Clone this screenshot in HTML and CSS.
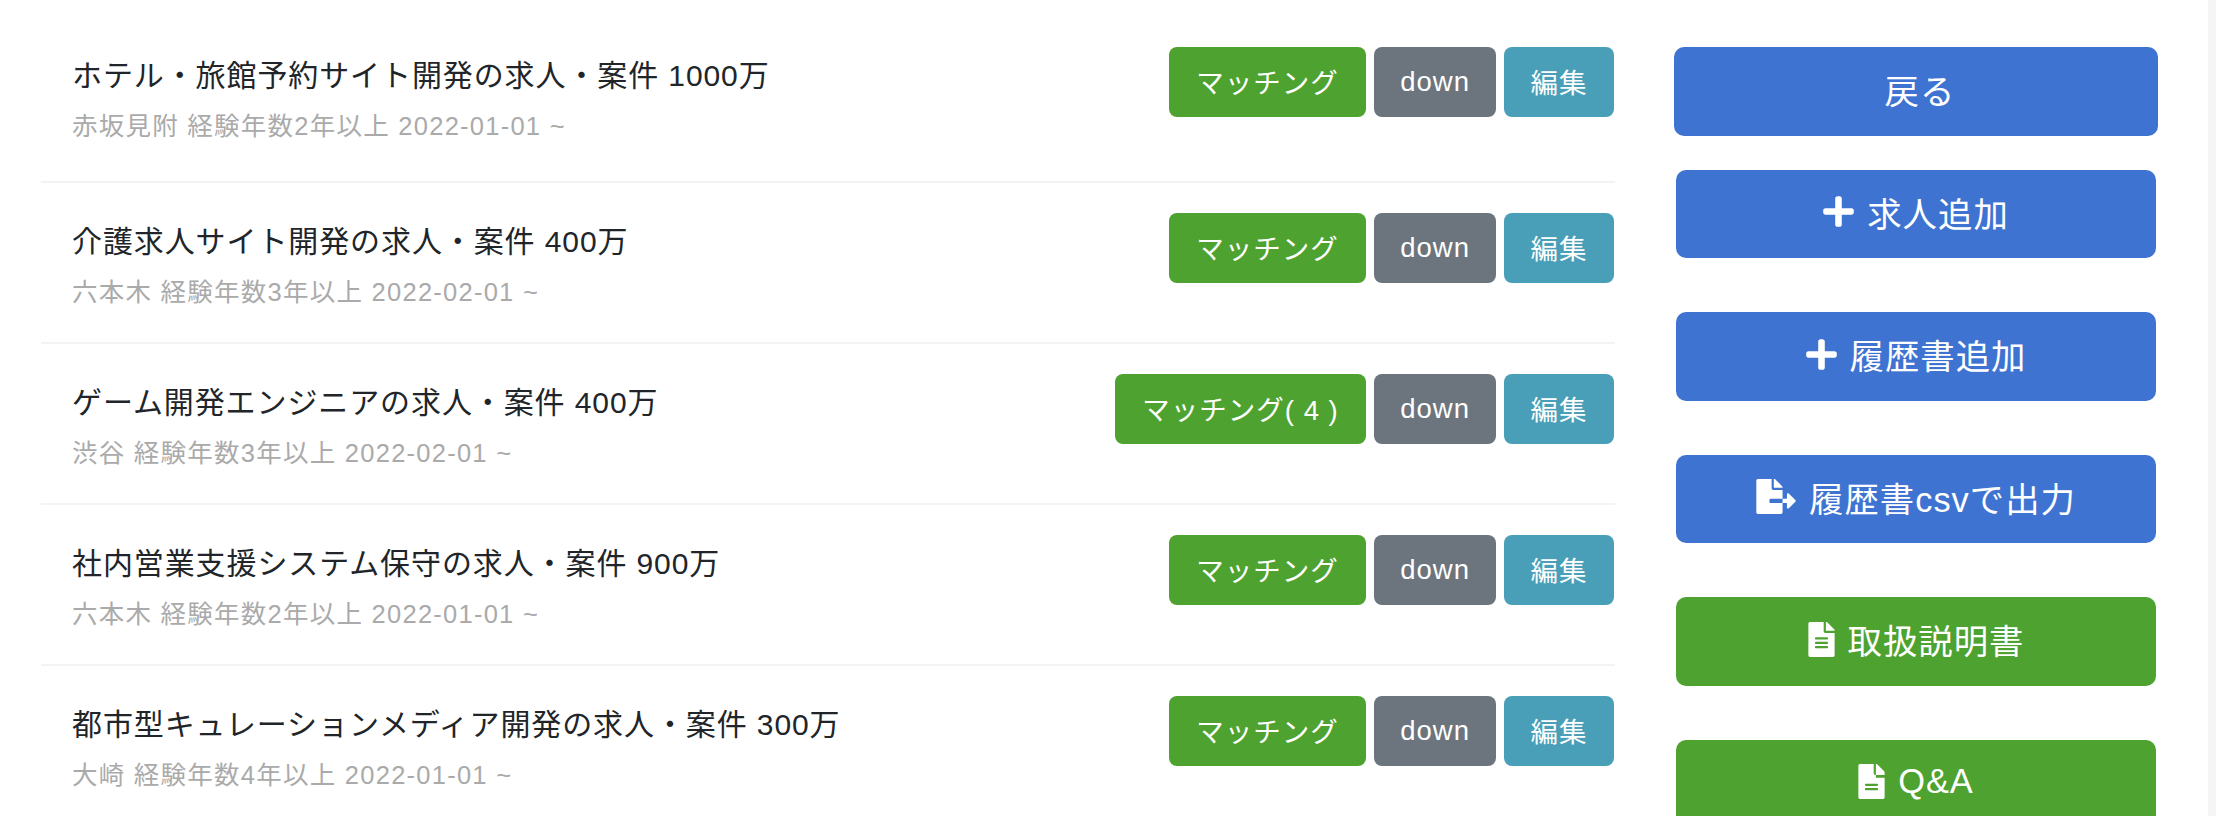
FILE: index.html
```html
<!DOCTYPE html>
<html lang="ja">
<head>
    <meta charset="UTF-8">
    <title>求人一覧</title>
    <link rel="stylesheet" href="styles.css">
</head>
<body>
    <div class="content">
        <div class="list">
            <div class="row row-first">
                <div class="info">
                    <div class="title">ホテル・旅館予約サイト開発の求人・案件 1000万</div>
                    <div class="sub">赤坂見附 経験年数2年以上 2022-01-01 ~</div>
                </div>
                <div class="actions">
                    <a class="btn btn-green">マッチング</a>
                    <a class="btn btn-gray">down</a>
                    <a class="btn btn-teal">編集</a>
                </div>
            </div>
            <div class="row">
                <div class="info">
                    <div class="title">介護求人サイト開発の求人・案件 400万</div>
                    <div class="sub">六本木 経験年数3年以上 2022-02-01 ~</div>
                </div>
                <div class="actions">
                    <a class="btn btn-green">マッチング</a>
                    <a class="btn btn-gray">down</a>
                    <a class="btn btn-teal">編集</a>
                </div>
            </div>
            <div class="row">
                <div class="info">
                    <div class="title">ゲーム開発エンジニアの求人・案件 400万</div>
                    <div class="sub">渋谷 経験年数3年以上 2022-02-01 ~</div>
                </div>
                <div class="actions">
                    <a class="btn btn-green">マッチング( 4 )</a>
                    <a class="btn btn-gray">down</a>
                    <a class="btn btn-teal">編集</a>
                </div>
            </div>
            <div class="row">
                <div class="info">
                    <div class="title">社内営業支援システム保守の求人・案件 900万</div>
                    <div class="sub">六本木 経験年数2年以上 2022-01-01 ~</div>
                </div>
                <div class="actions">
                    <a class="btn btn-green">マッチング</a>
                    <a class="btn btn-gray">down</a>
                    <a class="btn btn-teal">編集</a>
                </div>
            </div>
            <div class="row">
                <div class="info">
                    <div class="title">都市型キュレーションメディア開発の求人・案件 300万</div>
                    <div class="sub">大崎 経験年数4年以上 2022-01-01 ~</div>
                </div>
                <div class="actions">
                    <a class="btn btn-green">マッチング</a>
                    <a class="btn btn-gray">down</a>
                    <a class="btn btn-teal">編集</a>
                </div>
            </div>
        </div>

        <div class="side">
            <a class="side-btn side-back side-blue">戻る</a>
            <a class="side-btn side-blue">
                <svg class="icon icon-plus" viewBox="0 0 448 512"><path d="M416 208H272V64c0-17.67-14.33-32-32-32h-32c-17.67 0-32 14.33-32 32v144H32c-17.67 0-32 14.33-32 32v32c0 17.67 14.33 32 32 32h144v144c0 17.67 14.33 32 32 32h32c17.67 0 32-14.33 32-32V304h144c17.67 0 32-14.33 32-32v-32c0-17.67-14.33-32-32-32z"/></svg>
                求人追加
            </a>
            <a class="side-btn side-blue">
                <svg class="icon icon-plus" viewBox="0 0 448 512"><path d="M416 208H272V64c0-17.67-14.33-32-32-32h-32c-17.67 0-32 14.33-32 32v144H32c-17.67 0-32 14.33-32 32v32c0 17.67 14.33 32 32 32h144v144c0 17.67 14.33 32 32 32h32c17.67 0 32-14.33 32-32V304h144c17.67 0 32-14.33 32-32v-32c0-17.67-14.33-32-32-32z"/></svg>
                履歴書追加
            </a>
            <a class="side-btn side-blue">
                <svg class="icon icon-export" viewBox="0 0 576 512"><path d="M384 121.9c0-6.3-2.5-12.4-7-16.9L279.1 7c-4.5-4.5-10.6-7-17-7H256v128h128zM571 308l-95.7-96.4c-10.1-10.1-27.4-3-27.4 11.3V288h-64v64h64v65.2c0 14.3 17.3 21.4 27.4 11.3L571 332c6.6-6.6 6.6-17.4 0-24zm-379 28v-32c0-8.8 7.2-16 16-16h176V160H248c-13.2 0-24-10.8-24-24V0H24C10.7 0 0 10.7 0 24v464c0 13.3 10.7 24 24 24h336c13.3 0 24-10.7 24-24V352H208c-8.8 0-16-7.2-16-16z"/></svg>
                履歴書csvで出力
            </a>
            <a class="side-btn side-green">
                <svg class="icon icon-file" viewBox="0 0 384 512"><path d="M224 136V0H24C10.7 0 0 10.7 0 24v464c0 13.3 10.7 24 24 24h336c13.3 0 24-10.7 24-24V160H248c-13.2 0-24-10.8-24-24zm64 236c0 6.6-5.4 12-12 12H108c-6.6 0-12-5.4-12-12v-8c0-6.6 5.4-12 12-12h168c6.6 0 12 5.4 12 12v8zm0-64c0 6.6-5.4 12-12 12H108c-6.6 0-12-5.4-12-12v-8c0-6.6 5.4-12 12-12h168c6.6 0 12 5.4 12 12v8zm0-72v8c0 6.6-5.4 12-12 12H108c-6.6 0-12-5.4-12-12v-8c0-6.6 5.4-12 12-12h168c6.6 0 12 5.4 12 12zm96-114.1v6.1H256V0h6.1c6.4 0 12.5 2.5 17 7l97.9 98c4.5 4.5 7 10.6 7 16.9z"/></svg>
                取扱説明書
            </a>
            <a class="side-btn side-green">
                <svg class="icon icon-file" viewBox="0 0 384 512"><path d="M224 136V0H24C10.7 0 0 10.7 0 24v464c0 13.3 10.7 24 24 24h336c13.3 0 24-10.7 24-24V160H248c-13.2 0-24-10.8-24-24zm64 236c0 6.6-5.4 12-12 12H108c-6.6 0-12-5.4-12-12v-8c0-6.6 5.4-12 12-12h168c6.6 0 12 5.4 12 12v8zm0-64c0 6.6-5.4 12-12 12H108c-6.6 0-12-5.4-12-12v-8c0-6.6 5.4-12 12-12h168c6.6 0 12 5.4 12 12zm96-114.1v6.1H256V0h6.1c6.4 0 12.5 2.5 17 7l97.9 98c4.5 4.5 7 10.6 7 16.9z"/></svg>
                Q&amp;A
            </a>
        </div>

        <div class="scroll-track"></div>
    </div>
</body>
</html>
```

FILE: styles.css
```css
html, body {
    margin: 0;
    height: 100%;
    overflow: hidden;
    background-color: #fff;
}

body {
    font-family: "Liberation Sans", "Noto Sans CJK JP", sans-serif;
    color: #212529;
}

.content {
    display: flex;
    height: 816px;
    overflow: hidden;
    padding-top: 17px;
    padding-left: 41px;
    box-sizing: border-box;
}

.list {
    width: 1574px;
    flex-shrink: 0;
}

.row {
    display: flex;
    justify-content: space-between;
    align-items: flex-start;
    padding: 30px 1px 30px 31px;
    border-bottom: 2px solid #f3f3f3;
}

.row-first {
    padding-bottom: 35px;
}

.info {
    padding-top: 7px;
}

.title {
    font-size: 30px;
    line-height: 44px;
    letter-spacing: 0.9px;
}

.sub {
    font-size: 25.5px;
    line-height: 40px;
    margin-top: 8px;
    letter-spacing: 1.25px;
    color: #aaa;
}

.actions {
    display: flex;
    gap: 8px;
}

.btn {
    display: flex;
    align-items: center;
    height: 70px;
    padding: 0 26px 3px;
    border-radius: 8px;
    font-size: 27.5px;
    letter-spacing: 1px;
    color: #fff;
    box-sizing: border-box;
}

.btn-green { background-color: #4ea22f; padding: 0 27.5px 3px; }
.btn-gray { background-color: #6c757d; padding-bottom: 0; }
.btn-teal { background-color: #4a9fb8; padding: 0 26.5px 3px; }

.side {
    display: flex;
    flex-direction: column;
    flex-shrink: 0;
    width: 484px;
    margin-left: 59px;
    padding-top: 30px;
}

.side-btn {
    display: flex;
    flex-shrink: 0;
    align-items: center;
    justify-content: center;
    gap: 13px;
    height: 88.5px;
    margin: 0 2px 54px;
    padding-bottom: 4px;
    border-radius: 10px;
    font-size: 34.4px;
    letter-spacing: 1px;
    color: #fff;
    box-sizing: border-box;
}

.side-back {
    margin: 0 0 34px;
    padding-left: 8px;
    padding-bottom: 5px;
}

.side-blue { background-color: #3e73d1; }
.side-green { background-color: #4ea22f; }

.icon {
    height: 35px;
    fill: #fff;
}

.icon-plus { width: 31px; }
.icon-export { width: 40px; }
.icon-file { width: 27px; }

.scroll-track {
    width: 8px;
    height: 816px;
    margin-top: -17px;
    margin-left: auto;
    flex-shrink: 0;
    background-color: #f5f5f5;
}
```
